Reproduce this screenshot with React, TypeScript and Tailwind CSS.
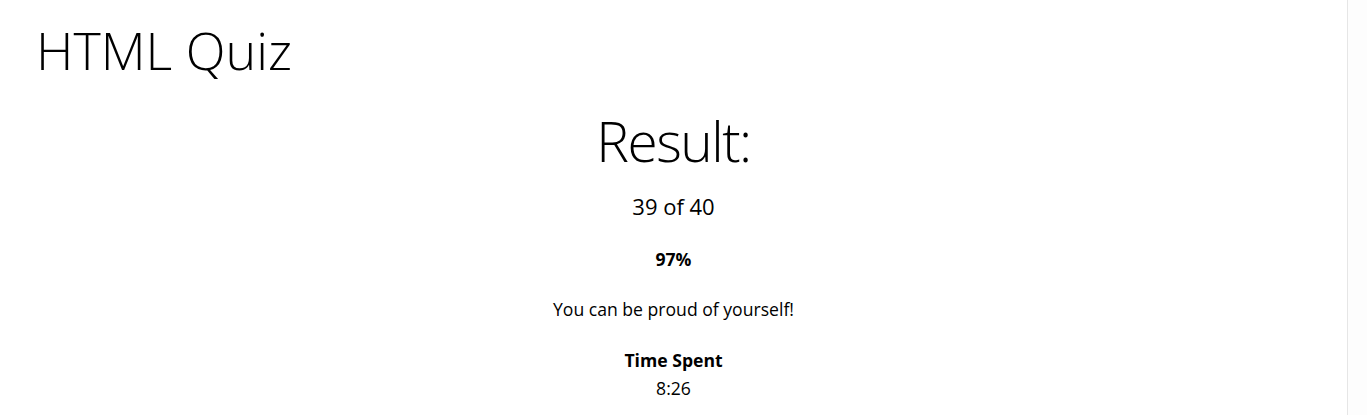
export default function App() {
  return (
    <div className="flex h-[415px] w-full bg-white text-black" style={{ fontFamily: '"Open Sans", sans-serif' }}>
      <div className="flex flex-1 flex-col">
        <h1 className="mt-[24px] pl-[36px] text-[52px] font-[350] leading-none">HTML Quiz</h1>
        <div className="flex flex-col items-center text-center">
          <h2 className="mt-[37px] text-[55px] font-[350] leading-none tracking-[-1.5px]">Result:</h2>
          <p className="mt-[27px] text-[22px] leading-none">39 of 40</p>
          <p className="mt-[34px] text-[17.6px] font-bold leading-none">97%</p>
          <p className="mt-[32.5px] text-[17.6px] leading-none">You can be proud of yourself!</p>
          <p className="mt-[33.4px] text-[17.6px] font-bold leading-none">Time Spent</p>
          <p className="mt-[10.4px] text-[17.6px] leading-none">8:26</p>
        </div>
      </div>
      <div className="w-[20px] border-l border-[#e6e6e6] bg-[#fdfdfd]" />
    </div>
  );
}
